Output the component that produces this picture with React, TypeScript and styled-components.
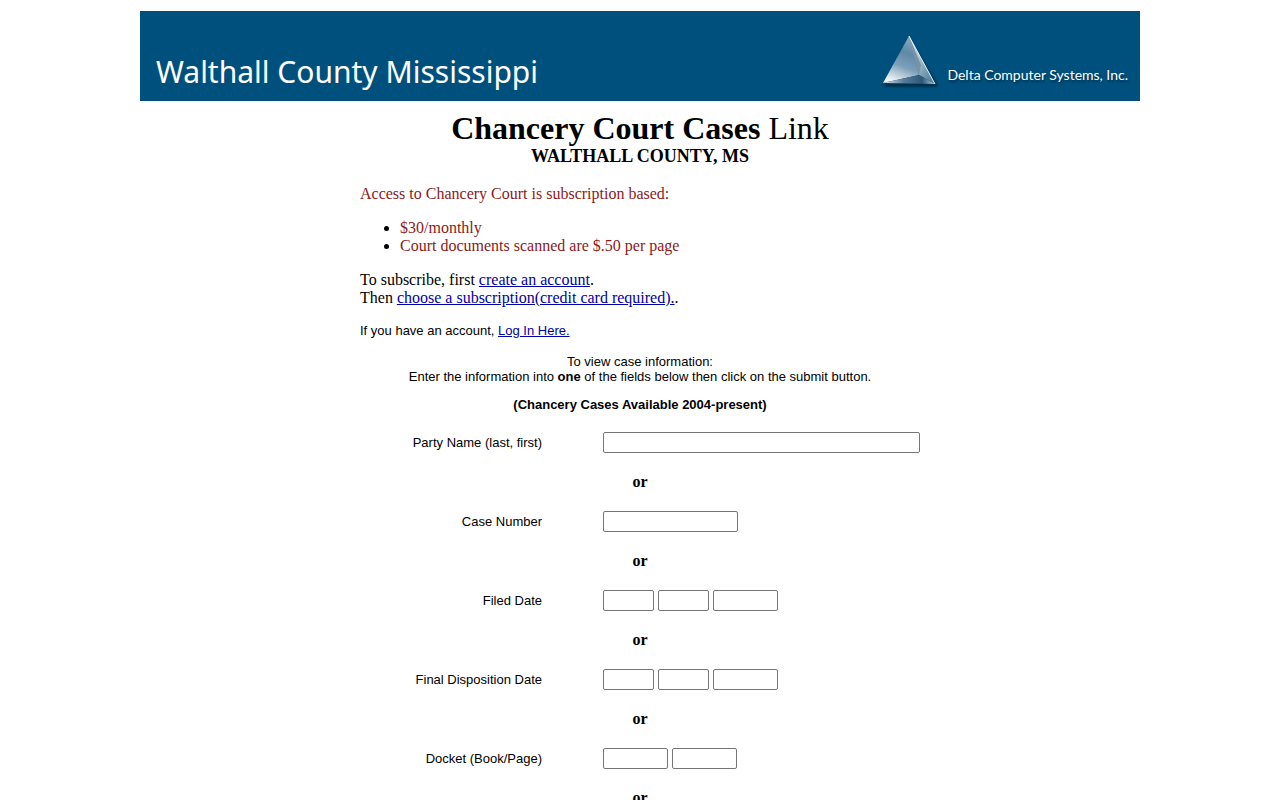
import React from "react";
import styled, { createGlobalStyle } from "styled-components";

const GlobalStyle = createGlobalStyle`
  body {
    margin: 0;
    background: #fff;
    color: #000;
    font: 16px/18px "Liberation Serif", "Times New Roman", serif;
  }
`;

const Page = styled.div`
  max-width: 1000px;
  margin: 0 auto;
  padding-top: 11px;
`;

const Banner = styled.header`
  display: flex;
  align-items: flex-end;
  justify-content: space-between;
  height: 90px;
  padding: 0 12px 0 16px;
  box-sizing: border-box;
  background: #00507d;
  color: #fff;
`;

const County = styled.div`
  padding-bottom: 9px;
  font: 30px/40px "Noto Sans", sans-serif;
`;

const Brand = styled.div`
  display: flex;
  align-items: flex-end;
  gap: 8px;
  padding-bottom: 12px;
`;

const BrandName = styled.span`
  font: 14px/28px Lato, sans-serif;
  text-shadow: 1px 2px 2px #00304f;
`;

const Content = styled.main`
  max-width: 560px;
  margin: 0 auto;
  padding-top: 9px;
`;

const Heading = styled.div`
  text-align: center;
`;

const Title = styled.h1`
  margin: 0;
  font-size: 32px;
  line-height: 36px;
`;

const TitleSuffix = styled.span`
  font-weight: 400;
`;

const Subtitle = styled.h2`
  margin: 0;
  font-size: 18px;
  line-height: 20px;
`;

const Notice = styled.p`
  margin: 19px 0 16px;
  color: #8b1a1a;
`;

const Prices = styled.ul`
  margin: 0;
  padding-left: 40px;
`;

const Price = styled.span`
  color: #8b1a1a;
`;

const Steps = styled.p`
  margin: 16px 0;
`;

const Link = styled.a`
  color: #0000a8;
  text-decoration: underline;
`;

const Note = styled.p<{ $center?: boolean }>`
  margin: 16px 0 0;
  font: 13px/15px "Liberation Sans", Arial, sans-serif;
  text-align: ${(p) => (p.$center ? "center" : "left")};
`;

const Availability = styled.p`
  margin: 13px 0 20px;
  font: bold 13px/15px "Liberation Sans", Arial, sans-serif;
  text-align: center;
`;

const SearchForm = styled.form`
  display: flex;
  flex-direction: column;
  gap: 20px;
`;

const FieldRow = styled.div`
  display: grid;
  grid-template-columns: 182px 1fr;
  column-gap: 61px;
  align-items: center;
`;

const FieldLabel = styled.label`
  font: 13px/15px "Liberation Sans", Arial, sans-serif;
  text-align: right;
`;

const Inputs = styled.div`
  display: flex;
  gap: 4px;
`;

const TextBox = styled.input<{ $width: number }>`
  width: ${(p) => p.$width}px;
  height: 21px;
  box-sizing: border-box;
  padding: 1px 2px;
  border: 1px solid #767676;
  border-radius: 2px;
  background: #fff;
  font: 13px "Liberation Sans", Arial, sans-serif;
`;

const Or = styled.div`
  font-weight: 700;
  text-align: center;
`;

type Field = { label: string; inputs: { name: string; width: number; hint?: string }[] };

const fields: Field[] = [
  { label: "Party Name (last, first)", inputs: [{ name: "party", width: 317 }] },
  { label: "Case Number", inputs: [{ name: "case", width: 135 }] },
  {
    label: "Filed Date",
    inputs: [
      { name: "filed-month", width: 51 },
      { name: "filed-day", width: 51, hint: "Filed day" },
      { name: "filed-year", width: 65, hint: "Filed year" },
    ],
  },
  {
    label: "Final Disposition Date",
    inputs: [
      { name: "disposed-month", width: 51 },
      { name: "disposed-day", width: 51, hint: "Final disposition day" },
      { name: "disposed-year", width: 65, hint: "Final disposition year" },
    ],
  },
  {
    label: "Docket (Book/Page)",
    inputs: [
      { name: "docket-book", width: 65 },
      { name: "docket-page", width: 65, hint: "Docket page" },
    ],
  },
];

function DeltaLogo() {
  return (
    <svg width="58" height="54" viewBox="0 0 58 54" aria-hidden="true">
      <defs>
        <linearGradient id="face" x1="0.75" y1="0" x2="0.45" y2="1">
          <stop offset="0" stopColor="#8fabc0" />
          <stop offset="0.35" stopColor="#5f89a8" />
          <stop offset="0.65" stopColor="#7c9fb9" />
          <stop offset="1" stopColor="#eef3f6" />
        </linearGradient>
        <linearGradient id="side" x1="0" y1="0" x2="0.8" y2="1">
          <stop offset="0" stopColor="#f4f7f8" />
          <stop offset="0.5" stopColor="#a5bccb" />
          <stop offset="1" stopColor="#4f7f9f" />
        </linearGradient>
        <linearGradient id="base" x1="0" y1="0" x2="1" y2="0">
          <stop offset="0" stopColor="#dce6ec" />
          <stop offset="0.4" stopColor="#547c98" />
          <stop offset="0.75" stopColor="#2e5878" />
          <stop offset="1" stopColor="#b8ccd8" />
        </linearGradient>
        <filter id="soft" x="-10%" y="-10%" width="125%" height="125%">
          <feGaussianBlur stdDeviation="1" />
        </filter>
      </defs>
      <path d="M3 50 L29 4 L57 50 L55 52 L5 52Z" fill="#00304f" filter="url(#soft)" />
      <path d="M2 48 L28 1 L38 40Z" fill="url(#face)" />
      <path d="M28 1 L54 49 L38 40Z" fill="url(#side)" />
      <path d="M28 1 L40 30 L38 40Z" fill="#7594aa" />
      <path d="M2 48 L38 40 L54 49Z" fill="url(#base)" />
      <path d="M28 1 L54 49" stroke="#eff4f6" strokeWidth="1" fill="none" />
    </svg>
  );
}

export default function App() {
  return (
    <>
      <GlobalStyle />
      <Page>
        <Banner>
          <County>Walthall County Mississippi</County>
          <Brand>
            <DeltaLogo />
            <BrandName>Delta Computer Systems, Inc.</BrandName>
          </Brand>
        </Banner>
        <Content>
          <Heading>
            <Title>
              Chancery Court Cases <TitleSuffix>Link</TitleSuffix>
            </Title>
            <Subtitle>WALTHALL COUNTY, MS</Subtitle>
          </Heading>
          <Notice>Access to Chancery Court is subscription based:</Notice>
          <Prices>
            <li>
              <Price>$30/monthly</Price>
            </li>
            <li>
              <Price>Court documents scanned are $.50 per page</Price>
            </li>
          </Prices>
          <Steps>
            To subscribe, first <Link href="#account">create an account</Link>.
            <br />
            Then <Link href="#subscription">choose a subscription(credit card required).</Link>.
          </Steps>
          <Note>
            If you have an account, <Link href="#login">Log In Here.</Link>
          </Note>
          <Note $center>
            To view case information:
            <br />
            Enter the information into <b>one</b> of the fields below then click on the submit button.
          </Note>
          <Availability>(Chancery Cases Available 2004-present)</Availability>
          <SearchForm>
            {fields.map((field) => (
              <React.Fragment key={field.label}>
                <FieldRow>
                  <FieldLabel htmlFor={field.inputs[0].name}>{field.label}</FieldLabel>
                  <Inputs>
                    {field.inputs.map((input) => (
                      <TextBox
                        key={input.name}
                        id={input.name}
                        name={input.name}
                        type="text"
                        aria-label={input.hint}
                        $width={input.width}
                      />
                    ))}
                  </Inputs>
                </FieldRow>
                <Or>or</Or>
              </React.Fragment>
            ))}
          </SearchForm>
        </Content>
      </Page>
    </>
  );
}
